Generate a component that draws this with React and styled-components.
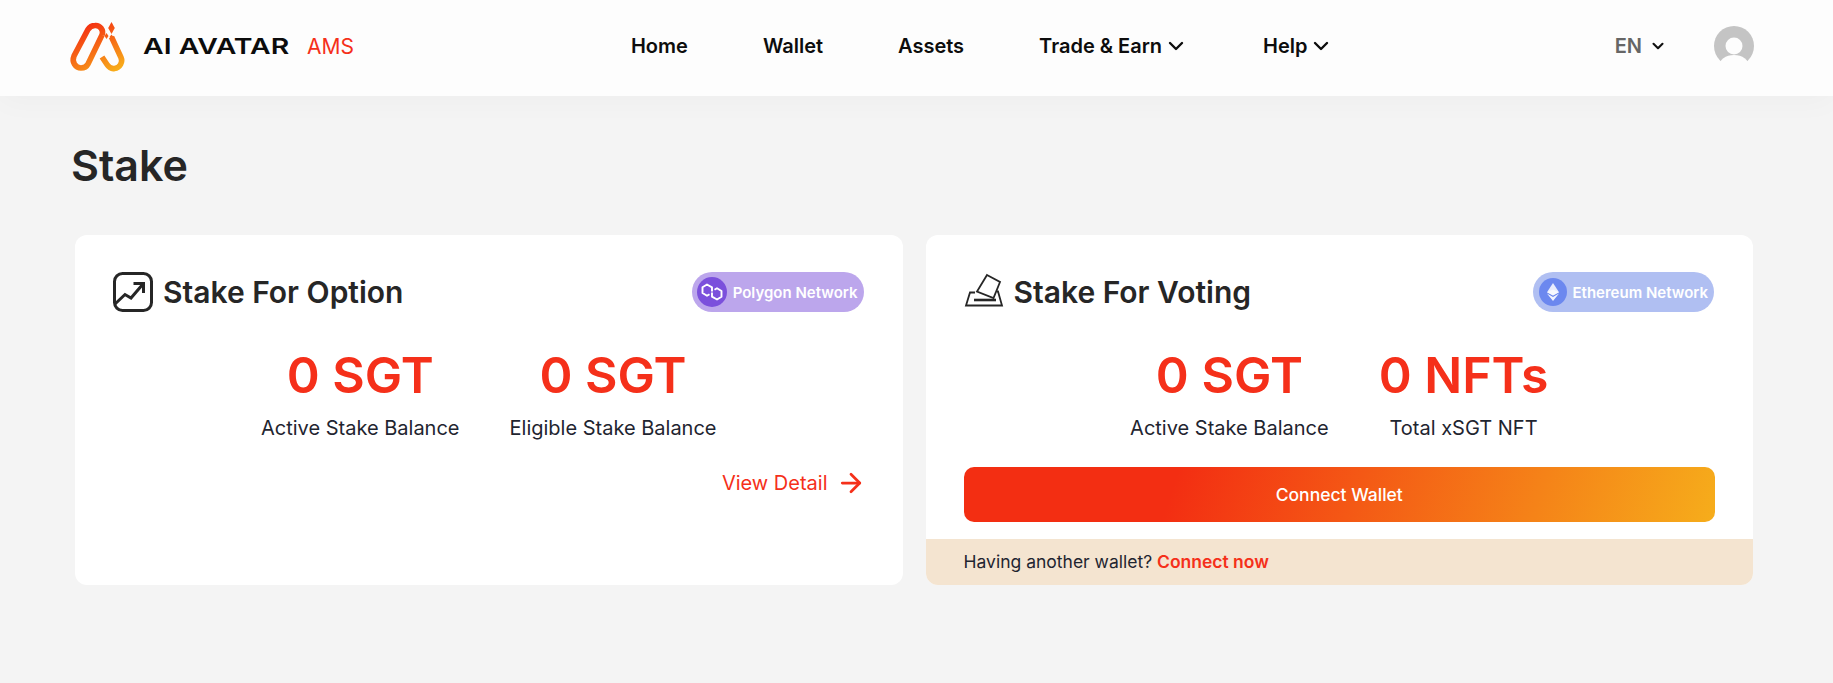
import React from 'react';
import styled, { createGlobalStyle } from 'styled-components';
import { ChevronDown, ArrowRight } from 'lucide-react';

const Global = createGlobalStyle`
  html, body {
    margin: 0;
    padding: 0;
    background: #f4f4f4;
    font-family: Inter, "Liberation Sans", sans-serif;
  }
  * { box-sizing: border-box; }
`;

const Page = styled.div`
  width: 100%;
  height: 683px;
  overflow: hidden;
  background: #f4f4f4;
`;

const Header = styled.header`
  display: flex;
  align-items: center;
  height: 96px;
  padding: 0 79px 4px 71px;
  background: #fdfdfd;
  box-shadow: 0 4px 30px rgba(0, 0, 0, 0.03);
`;

const Brand = styled.div`
  display: flex;
  align-items: center;
`;

const BrandName = styled.span`
  display: inline-block;
  width: 146px;
  margin-left: 20px;
  font-size: 22px;
  font-weight: 600;
  line-height: 1;
  white-space: nowrap;
  color: #0c0c0c;
  transform: scaleX(1.29);
  transform-origin: left center;
`;

const BrandTag = styled.span`
  margin-left: 18px;
  font-size: 21px;
  color: #f5301a;
`;

const Nav = styled.nav`
  display: flex;
  align-items: center;
  gap: 75px;
  margin-left: 277px;
`;

const NavItem = styled.a`
  display: flex;
  align-items: center;
  gap: 2px;
  font-size: 20px;
  font-weight: 600;
  color: #0d0d0d;
`;

const Account = styled.div`
  display: flex;
  align-items: center;
  margin-left: auto;
`;

const Lang = styled.span`
  display: flex;
  align-items: center;
  gap: 7px;
  margin-right: 47px;
  font-size: 20px;
  font-weight: 600;
  color: #666;
`;

const Main = styled.main`
  padding: 43px 80px 0 75px;
`;

const Title = styled.h1`
  margin: 0 0 44px -4px;
  font-size: 43px;
  line-height: 52px;
  font-weight: 600;
  color: #262626;
`;

const Cards = styled.div`
  display: grid;
  grid-template-columns: 1fr 1fr;
  gap: 23px;
`;

const Card = styled.section`
  display: flex;
  flex-direction: column;
  height: 350px;
  padding-top: 37px;
  border-radius: 12px;
  background: #fff;
  overflow: hidden;
`;

const CardHead = styled.div`
  display: flex;
  align-items: center;
  justify-content: space-between;
  padding: 0 39px 0 38px;
`;

const CardTitle = styled.h2`
  display: flex;
  align-items: center;
  gap: 10px;
  margin: 0;
  font-size: 30px;
  font-weight: 600;
  color: #262626;
`;

const Pill = styled.span`
  display: flex;
  align-items: center;
  gap: ${(p) => p.$gap}px;
  height: 40px;
  padding: 0 6px 0 ${(p) => p.$pad}px;
  border-radius: 20px;
  background: ${(p) => p.$bg};
  font-size: 15px;
  font-weight: 600;
  color: #fff;
`;

const PillIcon = styled.span`
  display: flex;
  align-items: center;
  justify-content: center;
  width: ${(p) => p.$size}px;
  height: ${(p) => p.$size}px;
  border-radius: 50%;
  background: ${(p) => p.$bg};
`;

const Stats = styled.div`
  display: flex;
  justify-content: center;
  gap: 50px;
  margin-top: 32px;
`;

const Stat = styled.div`
  display: flex;
  flex-direction: column;
  align-items: center;
`;

const StatValue = styled.div`
  font-size: 50px;
  line-height: 62px;
  font-weight: 600;
  color: #f5301a;
`;

const StatLabel = styled.div`
  margin-top: 8px;
  font-size: 20px;
  line-height: 28px;
  color: #1f2530;
`;

const ViewDetail = styled.a`
  display: flex;
  align-items: center;
  justify-content: flex-end;
  gap: 8px;
  margin-top: 26px;
  padding-right: 37px;
  font-size: 20px;
  line-height: 28px;
  color: #f5301a;
`;

const ConnectButton = styled.button`
  display: block;
  height: 55px;
  margin: 25px 38px 0;
  border: 0;
  border-radius: 10px;
  background: linear-gradient(108deg, #f32e12 28%, #f6ad1b 100%);
  font-family: inherit;
  font-size: 17.5px;
  font-weight: 500;
  color: #fff;
`;

const WalletBar = styled.div`
  height: 46px;
  margin-top: auto;
  padding: 0 38px;
  background: #f4e4d0;
  font-size: 17.5px;
  line-height: 46px;
  color: #1f2530;
`;

const WalletLink = styled.a`
  font-weight: 600;
  color: #f5301a;
`;

const Logo = () => (
  <svg width="65" height="62" viewBox="0 0 65 62" style={{ margin: '0 -7px 0 -6px' }}>
    <defs>
      <linearGradient id="logoGrad" gradientUnits="userSpaceOnUse" x1="24" y1="8" x2="50" y2="56">
        <stop offset="0" stopColor="#f42f12" />
        <stop offset="1" stopColor="#f8ad1a" />
      </linearGradient>
    </defs>
    <g fill="none" stroke="url(#logoGrad)" strokeWidth="5.6">
      <path d="M37 20C39 15 35 10 30 10.500C27 10.500 24.500 12 23 14.500L9 41C6.500 47 10.500 53 16 53C19 53 21.500 52 23 49L37 20" />
      <path d="M37 42L42 49.500C44 52.500 47 54 49.500 53.500C55 53 58 47 56 42.500L46.500 22" />
    </g>
    <g fill="url(#logoGrad)">
      <path d="M46.500 7L49.800 13L46.500 19L43.200 13Z" />
      <path d="M41.500 18L43.500 21L41.500 24L39.500 21Z" />
      <path d="M46.500 19.500L48.500 22L46.500 24.500L44.500 22Z" />
    </g>
  </svg>
);

const Avatar = () => (
  <svg width="40" height="40" viewBox="0 0 40 40">
    <circle cx="20" cy="20" r="20" fill="#c4c4c4" />
    <circle cx="20" cy="20" r="8.500" fill="#fdfdfd" />
    <ellipse cx="20" cy="40" rx="15" ry="11" fill="#fdfdfd" />
  </svg>
);

const TrendIcon = () => (
  <svg width="40" height="40" viewBox="0 0 40 40" fill="none" stroke="#262626" strokeWidth="3">
    <rect x="1.500" y="1.500" width="37" height="37" rx="8" />
    <path d="M2 32L12 22.500L18 26L30 12" />
    <path d="M20.500 11.500H30.500V21" />
  </svg>
);

const BallotIcon = () => (
  <svg width="40" height="40" viewBox="5 4 40 40" fill="none" stroke="#262626" strokeWidth="1.800">
    <path d="M28 7L41 14L34.500 30L18 23.500Z" fill="#fff" />
    <path d="M16 24.500H11L7 37.500H43L39 23.500H38" />
    <path d="M15 32H37" strokeWidth="2.600" />
  </svg>
);

const PolygonGlyph = () => (
  <svg width="22" height="18" viewBox="0 0 22 18" fill="none" stroke="#fff" strokeWidth="1.900" strokeLinejoin="round">
    <path d="M11 8.500V4.300L6 1.500L1.500 4.300V10L6 12.800L8.500 11.300" />
    <path d="M11 9.500V13.700L16 16.500L20.500 13.700V8L16 5.200L13.500 6.700" />
  </svg>
);

const EthGlyph = () => (
  <svg width="12" height="20" viewBox="0 0 16 24">
    <path d="M8 0L0 12.200L8 16.800L16 12.200Z" fill="#fff" opacity="0.85" />
    <path d="M8 8.500L0 12.200L8 16.800L16 12.200Z" fill="#fff" opacity="0.65" />
    <path d="M0 14L8 24L16 14L8 18.700Z" fill="#fff" opacity="0.9" />
  </svg>
);

const App = () => (
  <Page>
    <Global />
    <Header>
      <Brand>
        <Logo />
        <BrandName>AI AVATAR</BrandName>
        <BrandTag>AMS</BrandTag>
      </Brand>
      <Nav>
        <NavItem>Home</NavItem>
        <NavItem>Wallet</NavItem>
        <NavItem>Assets</NavItem>
        <NavItem>
          Trade &amp; Earn
          <ChevronDown size={24} strokeWidth={2.4} />
        </NavItem>
        <NavItem>
          Help
          <ChevronDown size={24} strokeWidth={2.4} />
        </NavItem>
      </Nav>
      <Account>
        <Lang>
          EN
          <ChevronDown size={18} strokeWidth={2.8} color="#111" />
        </Lang>
        <Avatar />
      </Account>
    </Header>
    <Main>
      <Title>Stake</Title>
      <Cards>
        <Card>
          <CardHead>
            <CardTitle>
              <TrendIcon />
              Stake For Option
            </CardTitle>
            <Pill $bg="#bca6ec" $pad={5} $gap={6}>
              <PillIcon $bg="#7b50dc" $size={30}>
                <PolygonGlyph />
              </PillIcon>
              Polygon Network
            </Pill>
          </CardHead>
          <Stats>
            <Stat>
              <StatValue>0 SGT</StatValue>
              <StatLabel>Active Stake Balance</StatLabel>
            </Stat>
            <Stat>
              <StatValue>0 SGT</StatValue>
              <StatLabel>Eligible Stake Balance</StatLabel>
            </Stat>
          </Stats>
          <ViewDetail>
            View Detail
            <ArrowRight size={30} strokeWidth={2.2} />
          </ViewDetail>
        </Card>
        <Card>
          <CardHead>
            <CardTitle>
              <BallotIcon />
              Stake For Voting
            </CardTitle>
            <Pill $bg="#b0bff2" $pad={6} $gap={6}>
              <PillIcon $bg="#6c88ef" $size={28}>
                <EthGlyph />
              </PillIcon>
              Ethereum Network
            </Pill>
          </CardHead>
          <Stats>
            <Stat>
              <StatValue>0 SGT</StatValue>
              <StatLabel>Active Stake Balance</StatLabel>
            </Stat>
            <Stat>
              <StatValue>0 NFTs</StatValue>
              <StatLabel>Total xSGT NFT</StatLabel>
            </Stat>
          </Stats>
          <ConnectButton>Connect Wallet</ConnectButton>
          <WalletBar>
            Having another wallet? <WalletLink>Connect now</WalletLink>
          </WalletBar>
        </Card>
      </Cards>
    </Main>
  </Page>
);

export default App;
